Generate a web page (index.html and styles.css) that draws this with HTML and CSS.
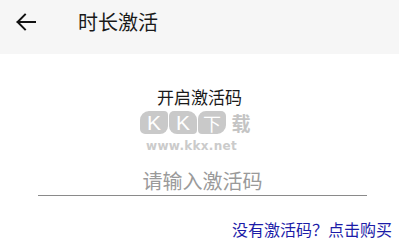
FILE: index.html
```html
<!DOCTYPE html>
<html lang="zh-CN">
<head>
<meta charset="utf-8">
<title>时长激活</title>
<link rel="stylesheet" href="styles.css">
</head>
<body>
<div class="page">
  <header class="topbar">
    <svg class="back" width="20" height="18" viewBox="0 0 20 18" aria-hidden="true">
      <path d="M1.6 9 H19.2 M9 1.6 L1.6 9 L9 16.4" fill="none" stroke="#111" stroke-width="2" stroke-linecap="square" stroke-linejoin="miter"/>
    </svg>
    <h1 class="title">时长激活</h1>
  </header>
  <main class="content">
    <div class="label">开启激活码</div>
    <input class="code" type="text" placeholder="请输入激活码">
    <div class="buy-row"><a class="buy" href="#">没有激活码？点击购买</a></div>
  </main>
  <div class="watermark" aria-hidden="true">
    <div class="wm-logo">
      <span class="blob b1">K</span><span class="blob b2">K</span><span class="blob b3">下</span><span class="blob b4">载</span>
    </div>
    <div class="wm-url">www.kkx.net</div>
  </div>
</div>
</body>
</html>
```
FILE: styles.css
```css
html, body {
  margin: 0;
  padding: 0;
  background: #ffffff;
}
body {
  font-family: "Noto Sans CJK SC", "Noto Sans", sans-serif;
  color: #1a1a1a;
}
.page {
  position: relative;
  width: 399px;
  height: 245px;
  overflow: hidden;
}
.topbar {
  height: 44px;
  padding-bottom: 10px;
  background: #f6f6f6;
  display: flex;
  align-items: center;
}
.back {
  margin-left: 16px;
  flex: none;
}
.title {
  margin: 0 0 0 42px;
  font-size: 20px;
  line-height: 24px;
  font-weight: 400;
  color: #1a1a1a;
}
.content {
  display: flex;
  flex-direction: column;
  align-items: center;
  padding-top: 33px;
}
.label {
  font-size: 17px;
  line-height: 20px;
  color: #1a1a1a;
}
.code {
  margin-top: 60px;
  width: 329px;
  height: 29px;
  box-sizing: border-box;
  padding: 0 0 1px 0;
  border: none;
  border-bottom: 1px solid #8a8a8a;
  outline: none;
  background: transparent;
  text-align: center;
  font-family: "Noto Sans CJK SC", "Noto Sans", sans-serif;
  font-size: 20px;
  line-height: 28px;
  color: #333;
  position: relative;
  left: 3px;
}
.code::placeholder {
  color: #9a9a9a;
}
.buy-row {
  align-self: stretch;
  display: flex;
  justify-content: flex-end;
  padding-right: 7px;
  margin-top: 22px;
}
.buy {
  font-size: 16px;
  line-height: 22px;
  color: #1c1ca8;
  text-decoration: none;
}
.watermark {
  position: absolute;
  left: 140px;
  top: 111px;
  width: 120px;
  pointer-events: none;
}
.wm-logo {
  display: flex;
  gap: 1px;
}
.blob {
  width: 28px;
  height: 23px;
  background: #c9c9c9;
  color: #ffffff;
  display: flex;
  align-items: center;
  justify-content: center;
  font-family: "Liberation Sans", sans-serif;
  font-weight: 400;
  font-size: 21px;
  line-height: 21px;
}
.b1 { border-radius: 9px 4px 8px 5px; }
.b2 { border-radius: 5px 9px 4px 8px; }
.b3 { border-radius: 8px 5px 9px 4px; font-family: "Noto Sans CJK SC", sans-serif; font-size: 18px; line-height: 18px; }
.b4 { border-radius: 4px 8px 5px 9px; background: transparent; color: #c4c4c4; font-family: "Noto Sans CJK SC", sans-serif; font-weight: 700; font-size: 19px; line-height: 19px; }
.wm-url {
  margin: 6px 0 0 6px;
  font-family: "DejaVu Sans", sans-serif;
  font-weight: 700;
  font-size: 12px;
  line-height: 12px;
  letter-spacing: 0.3px;
  color: #cbcbcb;
}
```
